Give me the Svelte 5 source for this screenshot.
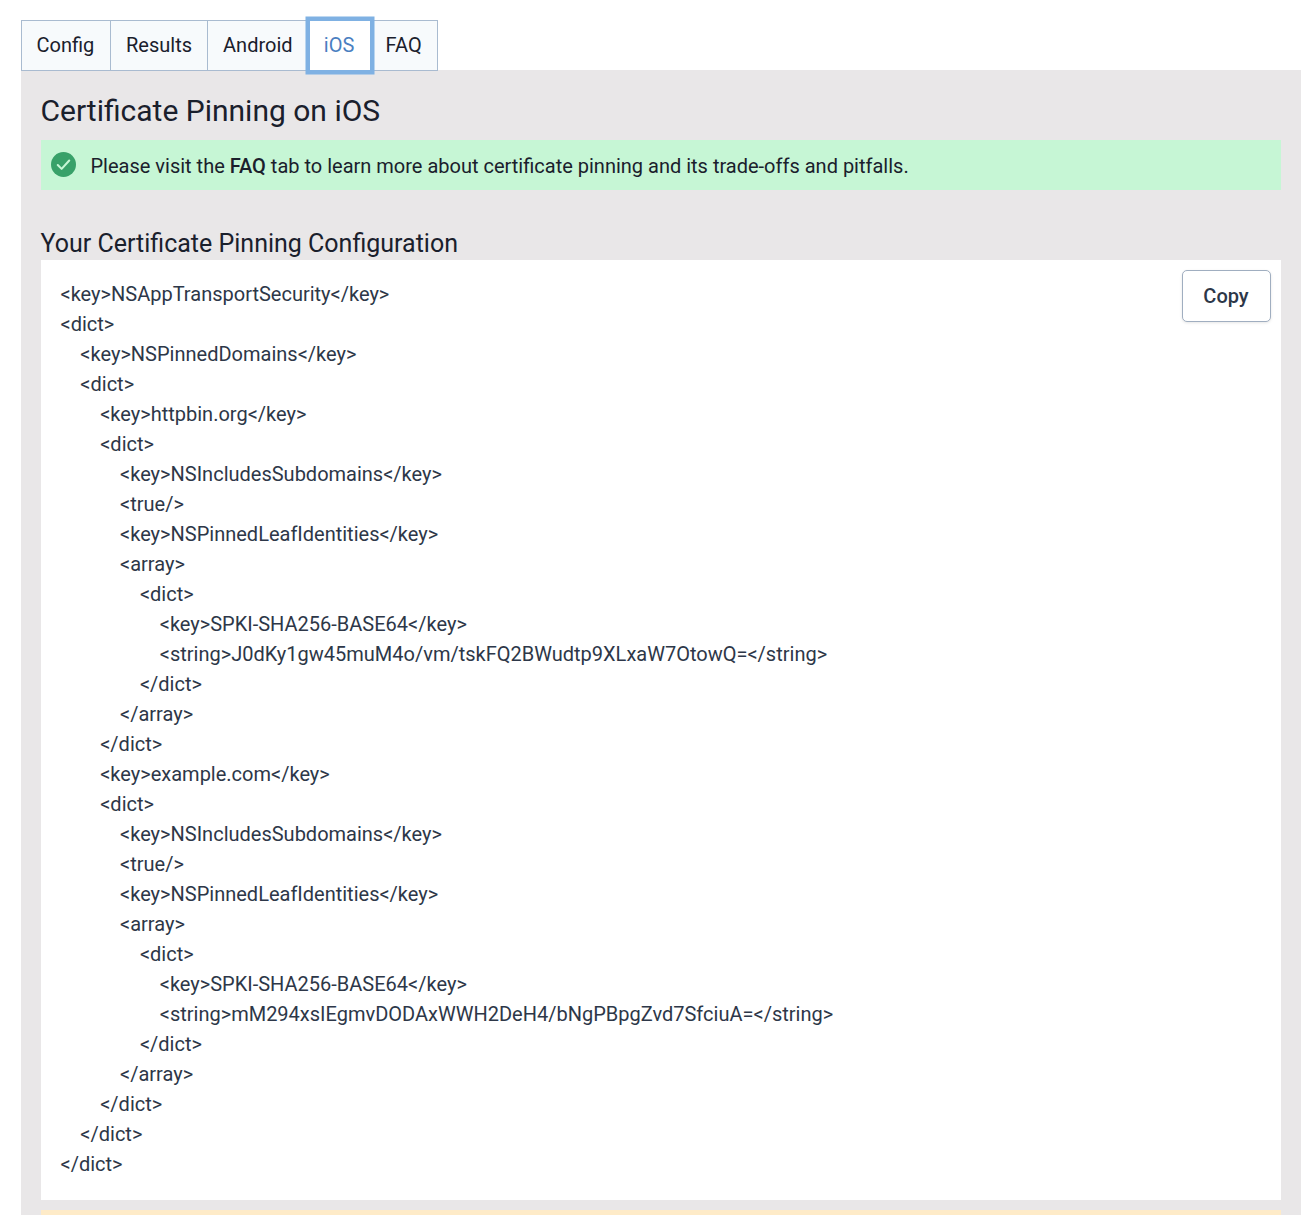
<script>
  const tabs = ['Config', 'Results', 'Android', 'iOS', 'FAQ'];
  const active = 'iOS';
  const config = `<key>NSAppTransportSecurity</key>
<dict>
    <key>NSPinnedDomains</key>
    <dict>
        <key>httpbin.org</key>
        <dict>
            <key>NSIncludesSubdomains</key>
            <true/>
            <key>NSPinnedLeafIdentities</key>
            <array>
                <dict>
                    <key>SPKI-SHA256-BASE64</key>
                    <string>J0dKy1gw45muM4o/vm/tskFQ2BWudtp9XLxaW7OtowQ=</string>
                </dict>
            </array>
        </dict>
        <key>example.com</key>
        <dict>
            <key>NSIncludesSubdomains</key>
            <true/>
            <key>NSPinnedLeafIdentities</key>
            <array>
                <dict>
                    <key>SPKI-SHA256-BASE64</key>
                    <string>mM294xsIEgmvDODAxWWH2DeH4/bNgPBpgZvd7SfciuA=</string>
                </dict>
            </array>
        </dict>
    </dict>
</dict>`;
</script>

<div class="page">
  <div class="tabs">
    {#each tabs as tab}
      <button class="tab" class:active={tab === active}>{tab}</button>
    {/each}
  </div>
  <div class="panel">
    <h1>Certificate Pinning on iOS</h1>
    <div class="alert success">
      <svg class="icon" viewBox="0 0 24 24" aria-hidden="true">
        <circle cx="12" cy="12" r="12" fill="#38a169" />
        <path d="M6.5 12.5l3.7 3.7 7.3-8" fill="none" stroke="#c6f6d5" stroke-width="2" stroke-linecap="round" stroke-linejoin="round" />
      </svg>
      <span>Please visit the <b>FAQ</b> tab to learn more about certificate pinning and its trade-offs and pitfalls.</span>
    </div>
    <h2>Your Certificate Pinning Configuration</h2>
    <div class="code">
      <button class="copy">Copy</button>
      <pre>{config}</pre>
    </div>
    <div class="alert warning"></div>
  </div>
</div>

<style>
  :global(body) {
    margin: 0;
    background: #fff;
    overflow: hidden;
  }
  .page {
    height: 1215px;
    overflow: hidden;
    padding: 19.5px 4.5px 0 20.5px;
    box-sizing: border-box;
    font-family: Roboto, "Liberation Sans", sans-serif;
    font-size: 20px;
    line-height: 30px;
    color: #1a202c;
  }
  .tabs {
    display: flex;
    position: relative;
    z-index: 1;
    height: 50.5px;
  }
  .tab {
    font: inherit;
    color: #1a202c;
    background: #f7fafc;
    border: 1px solid #a9bbd0;
    border-left-width: 0;
    padding: 0 15px;
    margin: 0;
    height: 51.5px;
    box-sizing: border-box;
  }
  .tab:first-child {
    border-left-width: 1px;
    padding-right: 15.75px;
  }
  .tab.active {
    position: relative;
    background: #fff;
    color: #4a7fc1;
    border: 1px solid #7fb1e3;
    padding: 0 14px 0 13px;
    box-shadow: 0 0 0 3.5px #7fb1e3;
    width: 62px;
    outline: none;
  }
  .panel {
    background: #e9e7e8;
    padding: 20.5px 20px 0;
    height: 1145px;
    box-sizing: border-box;
  }
  h1 {
    font-size: 30px;
    font-weight: 400;
    line-height: 40px;
    margin: 0 0 9px;
    color: #1a202c;
  }
  .alert {
    display: flex;
    align-items: center;
    gap: 15px;
    height: 50px;
    padding: 2px 10px 0;
    box-sizing: border-box;
  }
  .success {
    background: #c6f6d5;
  }
  .icon {
    width: 25px;
    height: 25px;
    flex: none;
    margin-top: -2px;
  }
  b {
    font-weight: 500;
  }
  h2 {
    font-size: 25px;
    font-weight: 400;
    line-height: 30px;
    margin: 39px 0 1px;
    color: #1a202c;
  }
  .code {
    position: relative;
    background: #fff;
    height: 940px;
    padding: 19px 20px;
    box-sizing: border-box;
  }
  pre {
    margin: 0;
    font: inherit;
    color: #2d3748;
    white-space: pre;
  }
  .copy {
    position: absolute;
    top: 10px;
    right: 10px;
    width: 89px;
    height: 52px;
    font: inherit;
    font-weight: 500;
    color: #2d3748;
    background: #fff;
    border: 1px solid #a0aec0;
    border-radius: 5px;
    box-shadow: 0 1px 3px rgba(0, 0, 0, 0.1);
    padding: 0;
  }
  .warning {
    background: #feebc8;
    margin-top: 10px;
  }
</style>
